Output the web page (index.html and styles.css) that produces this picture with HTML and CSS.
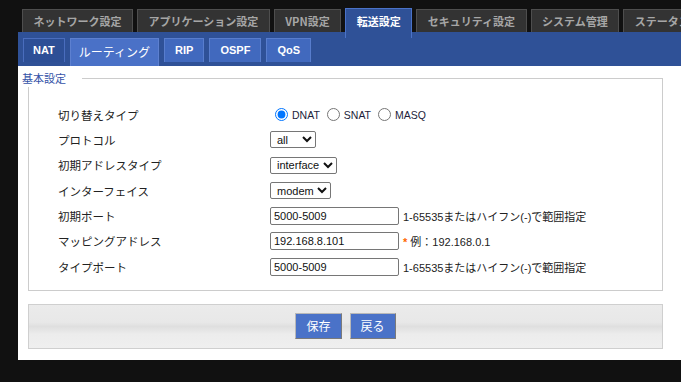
FILE: index.html
```html
<!DOCTYPE html>
<html lang="ja">
<head>
<meta charset="utf-8">
<title>転送設定 - NAT</title>
<link rel="stylesheet" href="styles.css">
</head>
<body>
<nav class="topnav">
  <div class="tab">ネットワーク設定</div>
  <div class="tab">アプリケーション設定</div>
  <div class="tab">VPN設定</div>
  <div class="tab active">転送設定</div>
  <div class="tab">セキュリティ設定</div>
  <div class="tab">システム管理</div>
  <div class="tab">ステータス</div>
</nav>
<div class="main">
  <div class="subnav">
    <div class="subtab nat">NAT</div>
    <div class="subtab hover">ルーティング</div>
    <div class="subtab">RIP</div>
    <div class="subtab">OSPF</div>
    <div class="subtab">QoS</div>
  </div>
  <div class="content">
    <fieldset class="box">
      <legend class="legend">基本設定</legend>
      <div class="form">
        <div class="label">切り替えタイプ</div>
        <div class="ctrl radios">
          <label class="radio"><input type="radio" name="t" checked> DNAT</label>
          <label class="radio"><input type="radio" name="t"> SNAT</label>
          <label class="radio"><input type="radio" name="t"> MASQ</label>
        </div>
        <div class="label">プロトコル</div>
        <div class="ctrl"><select class="sel sel-all"><option>all</option></select></div>
        <div class="label">初期アドレスタイプ</div>
        <div class="ctrl"><select class="sel sel-if"><option>interface</option></select></div>
        <div class="label">インターフェイス</div>
        <div class="ctrl"><select class="sel sel-modem"><option>modem</option></select></div>
        <div class="label">初期ポート</div>
        <div class="ctrl"><input class="txt" type="text" value="5000-5009"><span class="hint">1-65535またはハイフン(-)で範囲指定</span></div>
        <div class="label">マッピングアドレス</div>
        <div class="ctrl"><input class="txt" type="text" value="192.168.8.101"><span class="hint"><span class="req">*</span> 例：192.168.0.1</span></div>
        <div class="label">タイプポート</div>
        <div class="ctrl"><input class="txt" type="text" value="5000-5009"><span class="hint">1-65535またはハイフン(-)で範囲指定</span></div>
      </div>
    </fieldset>
    <div class="actions">
      <button class="btn">保存</button>
      <button class="btn">戻る</button>
    </div>
  </div>
</div>
</body>
</html>
```

FILE: styles.css
```css
html, body {
  margin: 0;
  padding: 0;
}
body {
  background: #111111;
  width: 681px;
  height: 382px;
  overflow: hidden;
  font-family: "Liberation Sans", "Noto Sans CJK JP", sans-serif;
  color: #222;
}

.topnav {
  display: flex;
  gap: 4px;
  height: 32px;
  box-sizing: border-box;
  padding: 9px 0 0 22px;
  align-items: flex-start;
  white-space: nowrap;
}
.tab {
  height: 23px;
  box-sizing: border-box;
  padding: 0 10.5px;
  background: #333333;
  border: 1px solid #4e4e4e;
  border-bottom: none;
  color: #a6a6a6;
  font-family: "Noto Sans CJK JP", sans-serif;
  font-weight: bold;
  font-size: 11px;
  line-height: 22px;
}
.tab.active {
  position: relative;
  z-index: 1;
  margin-top: -1px;
  height: 30px;
  background: #2f5197;
  border-color: #4a72c8;
  color: #ffffff;
  line-height: 25px;
}

.main {
  margin-left: 18px;
  background: #ffffff;
  height: 328px;
}
.subnav {
  height: 34px;
  box-sizing: border-box;
  background: #2f5197;
  display: flex;
  gap: 5px;
  padding: 6px 0 0 5px;
  align-items: flex-start;
}
.subtab {
  height: 24px;
  box-sizing: border-box;
  padding: 0 10px;
  border: 1px solid #587dcd;
  border-bottom: none;
  background: #4169be;
  color: #ffffff;
  font-weight: bold;
  font-size: 11px;
  line-height: 22px;
}
.subtab.nat {
  padding: 0 9px;
  background: #2d4f96;
  border-color: #4a6dbd;
}
.subtab.hover {
  height: 28px;
  padding: 0 8px;
  background: #4a71c7;
  border-color: #5d80d0;
  font-family: "Noto Sans CJK JP", sans-serif;
  font-weight: normal;
  font-size: 12px;
  line-height: 26px;
}

.content {
  padding: 3px 18px 12px 10px;
}
.box {
  margin: 0;
  padding: 0 0 11px 0;
  border: 1px solid #cccccc;
  min-width: 0;
}
.legend {
  margin-left: -7px;
  padding: 0 16px 0 0;
  background: #ffffff;
  color: #3553a8;
  font-family: "Noto Sans CJK JP", sans-serif;
  font-size: 11px;
  line-height: 18px;
}
.form {
  display: grid;
  grid-template-columns: 212px 1fr;
  grid-auto-rows: 25.33px;
  padding: 15px 0 0 29px;
  font-size: 11px;
}
.label {
  display: flex;
  align-items: center;
  font-family: "Noto Sans CJK JP", sans-serif;
  font-size: 11.5px;
  color: #222;
}
.ctrl {
  display: flex;
  align-items: center;
  white-space: nowrap;
}
.radio {
  display: inline-flex;
  align-items: center;
  margin-right: 2px;
  font-size: 10.5px;
  color: #1d1d3a;
}
.radio input {
  width: 13px;
  height: 13px;
  margin: 0 4px 0 5px;
  accent-color: #0075ff;
}
.sel {
  height: 17px;
  box-sizing: border-box;
  font-family: "Liberation Sans", sans-serif;
  font-size: 11px;
  color: #111;
  border: 1px solid #767676;
  border-radius: 2px;
  background: #fff;
  padding: 0 0 0 2px;
  margin: 0;
}
.sel-all { width: 46px; }
.sel-if { width: 67px; }
.sel-modem { width: 61px; }
.txt {
  width: 129px;
  height: 18px;
  box-sizing: border-box;
  margin: 0;
  padding: 0 3px;
  border: 1px solid #767676;
  border-radius: 2px;
  font-family: "Liberation Sans", sans-serif;
  font-size: 11px;
  color: #111;
}
.hint {
  margin-left: 4px;
  font-family: "Liberation Sans", "Noto Sans CJK JP", sans-serif;
  font-size: 11px;
  color: #222;
}
.req {
  color: #ff6600;
  font-weight: bold;
}

.actions {
  margin-top: 13px;
  height: 45px;
  box-sizing: border-box;
  border: 1px solid #cfcfcf;
  background: linear-gradient(#ebebeb 0%, #e8e8e8 40%, #dfdfdf 50%, #ececec 68%, #efefef 100%);
  display: flex;
  justify-content: center;
  align-items: flex-start;
  gap: 8px;
  padding-top: 8px;
}
.btn {
  height: 26px;
  padding: 0 10px;
  margin: 0;
  background: #4a72c8;
  border: 1px solid;
  border-color: #b8b8b8 #7a7a7a #7a7a7a #b8b8b8;
  color: #ffffff;
  font-family: "Noto Sans CJK JP", sans-serif;
  font-size: 12px;
  line-height: 24px;
}
```
